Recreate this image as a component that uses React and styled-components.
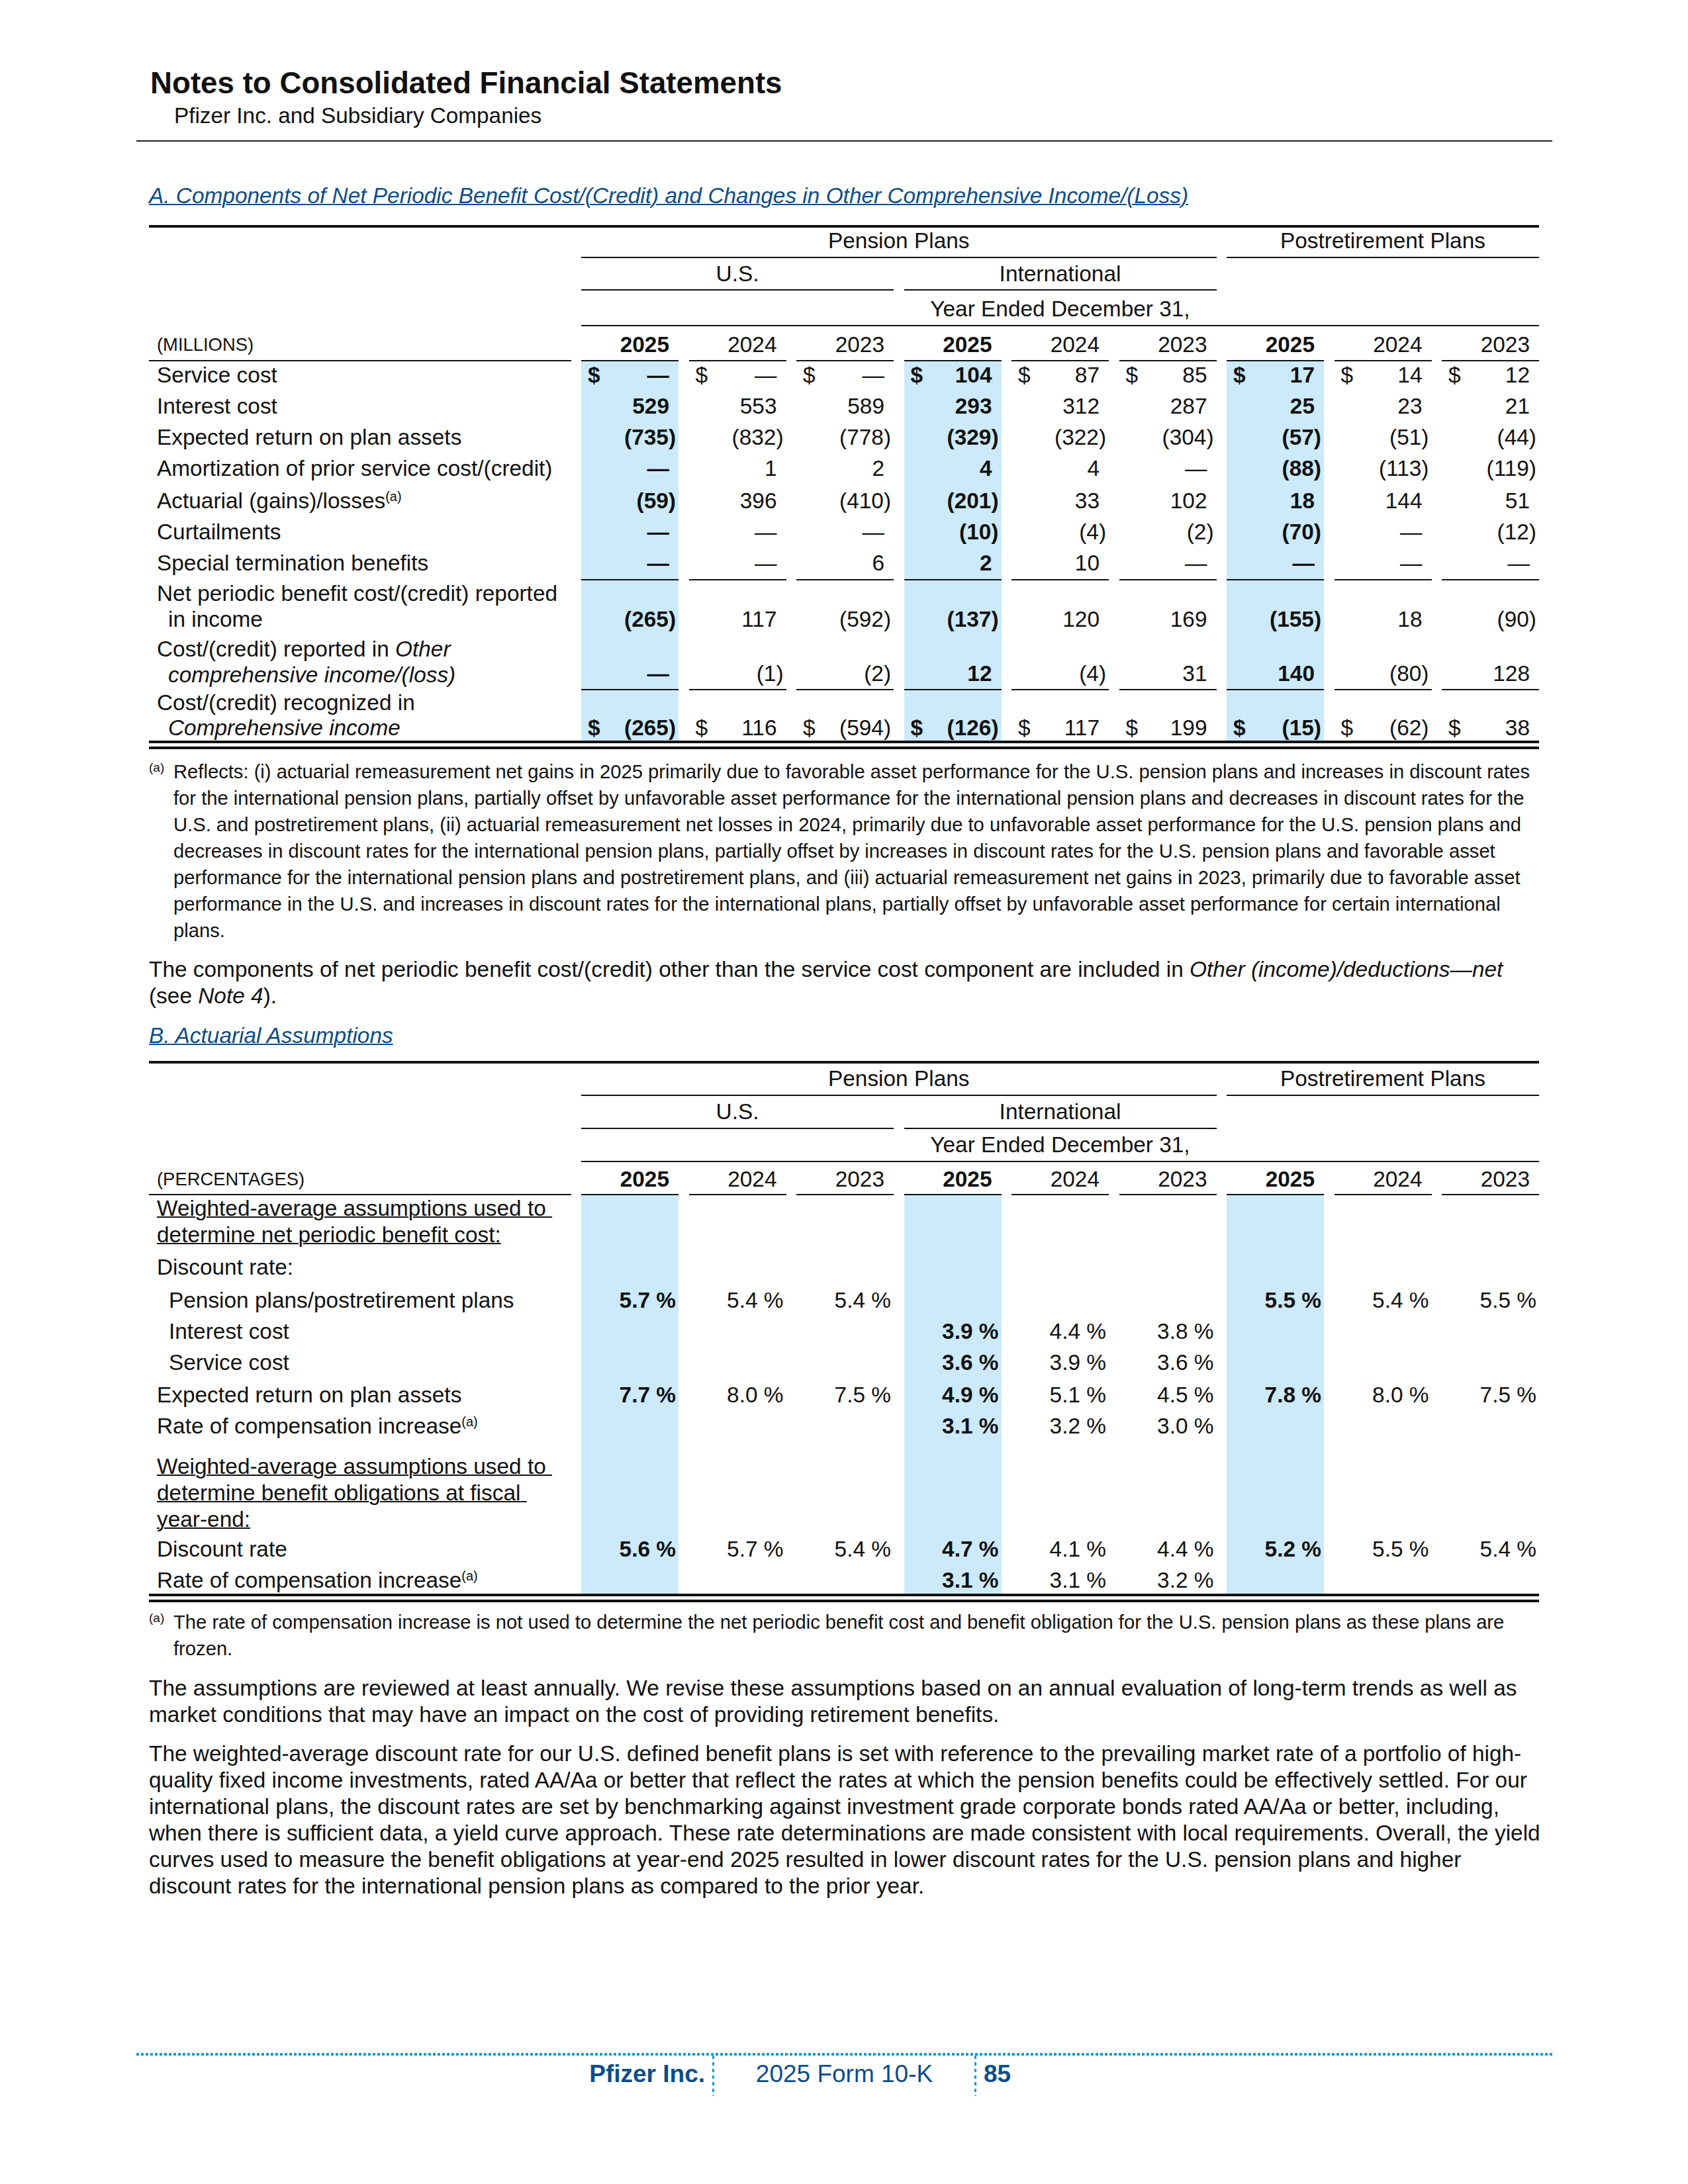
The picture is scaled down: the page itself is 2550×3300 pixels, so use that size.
import React from 'react'
import styled, { createGlobalStyle } from 'styled-components'

const INK = '#111'
const NAVY = '#0c4d8a'
const SKY = '#1599d6'
const HILITE = '#cceafc'
const COLS = '637.5px repeat(9, 147px)'
const HI = [true, false, false, true, false, false, true, false, false]
const EMPTY = ['', '', '', '', '', '', '', '', '']

const GlobalStyle = createGlobalStyle`
  html, body {
    margin: 0;
    padding: 0;
    background: #fff;
  }
  body {
    font-family: "Liberation Sans", Arial, sans-serif;
    color: ${INK};
  }
`

const Page = styled.div`
  width: 2550px;
  min-height: 3300px;
  box-sizing: border-box;
  padding: 100px 205px 133px 206px;
  display: flex;
  flex-direction: column;
`

const Header = styled.header`
  padding: 0 20px 17px 21px;
  border-bottom: 2px solid #222;
`

const Title = styled.h1`
  margin: 0;
  font-size: 45.7px;
  line-height: 52px;
  font-weight: 700;
`

const Subtitle = styled.div`
  margin-top: 3px;
  padding-left: 36px;
  font-size: 33.3px;
  line-height: 40px;
`

const Body = styled.main`
  padding: 0 20px 0 19px;
`

const SectionLink = styled.a`
  display: block;
  margin-top: ${p => p.$mt}px;
  font-size: 33.4px;
  line-height: 40px;
  font-style: italic;
  color: ${NAVY};
  text-decoration: underline;
  text-decoration-thickness: 2px;
  white-space: nowrap;
`

const Table = styled.div`
  margin-top: ${p => p.$mt}px;
  border-top: 4px solid ${INK};
  font-size: 33.4px;
`

const Row = styled.div`
  display: grid;
  grid-template-columns: ${COLS};
  column-gap: 15.5px;
  line-height: ${p => p.$lh || 40}px;

  & > * {
    padding-top: ${p => p.$pt ?? 1}px;
    padding-bottom: ${p => p.$pb ?? 6}px;
  }
`

const HeadCell = styled.div`
  grid-column: ${p => p.$col};
  text-align: center;
  white-space: nowrap;
  border-bottom: ${p => (p.$rule ? `2px solid ${INK}` : 'none')};
`

const Unit = styled.div`
  grid-column: 1;
  padding-left: 12px;
  font-size: 27.4px;
  border-bottom: 2px solid ${INK};
`

const YearCell = styled.div`
  text-align: right;
  padding-right: 14px;
  font-weight: ${p => (p.$bold ? 700 : 400)};
  border-bottom: 2px solid ${INK};
`

const Label = styled.div`
  grid-column: 1;
  white-space: nowrap;
  padding-left: ${p => 12 + (p.$indent ? 18 : 0) + (p.$hang ? 17 : 0)}px;
  text-indent: ${p => (p.$hang ? -17 : 0)}px;
`

const Val = styled.div`
  display: flex;
  justify-content: space-between;
  align-items: flex-end;
  padding-left: 10px;
  padding-right: 4px;
  white-space: nowrap;
  background: ${p => (p.$hi ? HILITE : 'transparent')};
  font-weight: ${p => (p.$hi ? 700 : 400)};
  border-bottom: ${p => (p.$rule ? `2px solid ${INK}` : 'none')};
`

const Amount = styled.span`
  padding-right: ${p => (p.$hang ? 10 : 0)}px;
`

const Sup = styled.sup`
  font-size: 20px;
  line-height: 0;
  vertical-align: 11px;
`

const Under = styled.span`
  text-decoration: underline;
  text-decoration-thickness: 2px;
`

const DoubleRule = styled.div`
  height: 5px;
  border-top: 4px solid ${INK};
  border-bottom: 4px solid ${INK};
`

const Note = styled.p`
  margin: ${p => p.$mt}px 0 0;
  padding-left: 37px;
  font-size: 29.2px;
  line-height: 40px;
  white-space: nowrap;
`

const NoteMark = styled.span`
  display: inline-block;
  width: 37px;
  margin-left: -37px;
  font-size: 19px;
  line-height: 1;
  vertical-align: 10px;
`

const Para = styled.p`
  margin: ${p => p.$mt}px 0 0;
  font-size: 33.4px;
  line-height: 40px;
  white-space: nowrap;
`

const Footer = styled.footer`
  margin-top: auto;
  color: ${NAVY};
  font-size: 37px;
  line-height: 44px;
`

const DotLine = styled.div`
  height: 4px;
  background: repeating-linear-gradient(90deg, ${SKY} 0 4px, transparent 4px 7px);
`

const FootRow = styled.div`
  display: grid;
  grid-template-columns: 1fr 399px 1fr;
  height: 61px;
`

const FootItem = styled.div`
  padding-top: 6px;
  text-align: ${p => p.$align || 'left'};
  padding-left: ${p => p.$pl || 0}px;
  padding-right: ${p => p.$pr || 0}px;
  font-weight: ${p => (p.$bold ? 700 : 400)};
`

const FootMid = styled(FootItem)`
  background-image:
    repeating-linear-gradient(180deg, ${SKY} 0 5px, transparent 5px 10px),
    repeating-linear-gradient(180deg, ${SKY} 0 5px, transparent 5px 10px);
  background-size: 3px 100%;
  background-position: left top, right top;
  background-repeat: no-repeat;
`

function Lines({ lines }) {
  return lines.map((l, i) => (
    <React.Fragment key={i}>
      {i > 0 && <br />}
      {l}
    </React.Fragment>
  ))
}

function Values({ vals = EMPTY, dollar, rule }) {
  return vals.map((v, i) => (
    <Val key={i} $hi={HI[i]} $rule={rule}>
      <span>{dollar ? '$' : ''}</span>
      {v !== '' && (
        <Amount $hang={!v.endsWith(')') && !v.includes('%')}>{v}</Amount>
      )}
    </Val>
  ))
}

function TableHead({ unit, rows }) {
  return (
    <>
      <Row $pt={rows[0][0]} $pb={rows[0][1]}>
        <HeadCell $col="2 / 8" $rule>Pension Plans</HeadCell>
        <HeadCell $col="8 / 11" $rule>Postretirement Plans</HeadCell>
      </Row>
      <Row $pt={rows[1][0]} $pb={rows[1][1]}>
        <HeadCell $col="2 / 5" $rule>U.S.</HeadCell>
        <HeadCell $col="5 / 8" $rule>International</HeadCell>
      </Row>
      <Row $pt={rows[2][0]} $pb={rows[2][1]}>
        <HeadCell $col="2 / 11" $rule>Year Ended December 31,</HeadCell>
      </Row>
      <Row $pt={rows[3][0]} $pb={rows[3][1]}>
        <Unit>{unit}</Unit>
        {['2025', '2024', '2023', '2025', '2024', '2023', '2025', '2024', '2023'].map((y, i) => (
          <YearCell key={i} $bold={HI[i]}>{y}</YearCell>
        ))}
      </Row>
    </>
  )
}

const costRows = [
  { label: 'Service cost', dollar: true, vals: ['—', '—', '—', '104', '87', '85', '17', '14', '12'] },
  { label: 'Interest cost', vals: ['529', '553', '589', '293', '312', '287', '25', '23', '21'] },
  { label: 'Expected return on plan assets', vals: ['(735)', '(832)', '(778)', '(329)', '(322)', '(304)', '(57)', '(51)', '(44)'] },
  { label: 'Amortization of prior service cost/(credit)', vals: ['—', '1', '2', '4', '4', '—', '(88)', '(113)', '(119)'] },
  { label: <>Actuarial (gains)/losses<Sup>(a)</Sup></>, pt: 3, pb: 6, vals: ['(59)', '396', '(410)', '(201)', '33', '102', '18', '144', '51'] },
  { label: 'Curtailments', vals: ['—', '—', '—', '(10)', '(4)', '(2)', '(70)', '—', '(12)'] },
  { label: 'Special termination benefits', pb: 4, rule: true, vals: ['—', '—', '6', '2', '10', '—', '—', '—', '—'] },
  {
    label: <Lines lines={['Net periodic benefit cost/(credit) reported', 'in income']} />,
    hang: true, lh: 39, pt: 0, pb: 6,
    vals: ['(265)', '117', '(592)', '(137)', '120', '169', '(155)', '18', '(90)'],
  },
  {
    label: <Lines lines={[<>Cost/(credit) reported in <i>Other</i></>, <i>comprehensive income/(loss)</i>]} />,
    hang: true, lh: 39, pt: 0, pb: 4, rule: true,
    vals: ['—', '(1)', '(2)', '12', '(4)', '31', '140', '(80)', '128'],
  },
  {
    label: <Lines lines={['Cost/(credit) recognized in', <i>Comprehensive income</i>]} />,
    hang: true, lh: 38, pt: 0, pb: 0, dollar: true,
    vals: ['(265)', '116', '(594)', '(126)', '117', '199', '(15)', '(62)', '38'],
  },
]

const pct = s => s.replace(' ', '\u00a0')

const rateRows = [
  {
    label: <Lines lines={[<Under>Weighted-average assumptions used to{'\u00a0'}</Under>, <Under>determine net periodic benefit cost:</Under>]} />,
    pt: 0, pb: 8,
  },
  { label: 'Discount rate:', pt: 1, pb: 9 },
  { label: 'Pension plans/postretirement plans', indent: true, vals: ['5.7 %', '5.4 %', '5.4 %', '', '', '', '5.5 %', '5.4 %', '5.5 %'] },
  { label: 'Interest cost', indent: true, vals: ['', '', '', '3.9 %', '4.4 %', '3.8 %', '', '', ''] },
  { label: 'Service cost', indent: true, pb: 8, vals: ['', '', '', '3.6 %', '3.9 %', '3.6 %', '', '', ''] },
  { label: 'Expected return on plan assets', vals: ['7.7 %', '8.0 %', '7.5 %', '4.9 %', '5.1 %', '4.5 %', '7.8 %', '8.0 %', '7.5 %'] },
  { label: <>Rate of compensation increase<Sup>(a)</Sup></>, pb: 5, vals: ['', '', '', '3.1 %', '3.2 %', '3.0 %', '', '', ''] },
  {
    label: (
      <Lines
        lines={[
          <Under>Weighted-average assumptions used to{'\u00a0'}</Under>,
          <Under>determine benefit obligations at fiscal{'\u00a0'}</Under>,
          <Under>year-end:</Under>,
        ]}
      />
    ),
    pt: 16, pb: 4,
  },
  { label: 'Discount rate', vals: ['5.6 %', '5.7 %', '5.4 %', '4.7 %', '4.1 %', '4.4 %', '5.2 %', '5.5 %', '5.4 %'] },
  { label: <>Rate of compensation increase<Sup>(a)</Sup></>, pt: 1, pb: 0, vals: ['', '', '', '3.1 %', '3.1 %', '3.2 %', '', '', ''] },
]

function BodyRows({ rows }) {
  return rows.map((r, i) => (
    <Row key={i} $pt={r.pt} $pb={r.pb} $lh={r.lh}>
      <Label $hang={r.hang} $indent={r.indent}>{r.label}</Label>
      <Values vals={r.vals ? r.vals.map(pct) : EMPTY} dollar={r.dollar} rule={r.rule} />
    </Row>
  ))
}

const note1 = [
  'Reflects: (i) actuarial remeasurement net gains in 2025 primarily due to favorable asset performance for the U.S. pension plans and increases in discount rates',
  'for the international pension plans, partially offset by unfavorable asset performance for the international pension plans and decreases in discount rates for the',
  'U.S. and postretirement plans, (ii) actuarial remeasurement net losses in 2024, primarily due to unfavorable asset performance for the U.S. pension plans and',
  'decreases in discount rates for the international pension plans, partially offset by increases in discount rates for the U.S. pension plans and favorable asset',
  'performance for the international pension plans and postretirement plans, and (iii) actuarial remeasurement net gains in 2023, primarily due to favorable asset',
  'performance in the U.S. and increases in discount rates for the international plans, partially offset by unfavorable asset performance for certain international',
  'plans.',
]

const note2 = [
  'The rate of compensation increase is not used to determine the net periodic benefit cost and benefit obligation for the U.S. pension plans as these plans are',
  'frozen.',
]

const reviewText = [
  'The assumptions are reviewed at least annually. We revise these assumptions based on an annual evaluation of long-term trends as well as',
  'market conditions that may have an impact on the cost of providing retirement benefits.',
]

const discountText = [
  'The weighted-average discount rate for our U.S. defined benefit plans is set with reference to the prevailing market rate of a portfolio of high-',
  'quality fixed income investments, rated AA/Aa or better that reflect the rates at which the pension benefits could be effectively settled. For our',
  'international plans, the discount rates are set by benchmarking against investment grade corporate bonds rated AA/Aa or better, including,',
  'when there is sufficient data, a yield curve approach. These rate determinations are made consistent with local requirements. Overall, the yield',
  'curves used to measure the benefit obligations at year-end 2025 resulted in lower discount rates for the U.S. pension plans and higher',
  'discount rates for the international pension plans as compared to the prior year.',
]

export default function App() {
  return (
    <>
      <GlobalStyle />
      <Page>
        <Header>
          <Title>Notes to Consolidated Financial Statements</Title>
          <Subtitle>Pfizer Inc. and Subsidiary Companies</Subtitle>
        </Header>

        <Body>
          <SectionLink $mt={62}>
            A. Components of Net Periodic Benefit Cost/(Credit) and Changes in Other Comprehensive Income/(Loss)
          </SectionLink>

          <Table $mt={24}>
            <TableHead unit="(MILLIONS)" rows={[[0, 4], [4, 3], [8, 4], [8, 3]]} />
            <BodyRows rows={costRows} />
            <DoubleRule />
          </Table>

          <Note $mt={14}>
            <NoteMark>(a)</NoteMark>
            <Lines lines={note1} />
          </Note>

          <Para $mt={19}>
            The components of net periodic benefit cost/(credit) other than the service cost component are included in{' '}
            <i>Other (income)/deductions—net</i>
            <br />
            (see <i>Note 4</i>).
          </Para>

          <SectionLink $mt={20}>B. Actuarial Assumptions</SectionLink>

          <Table $mt={18}>
            <TableHead unit="(PERCENTAGES)" rows={[[3, 4], [4, 4], [4, 4], [6, 2]]} />
            <BodyRows rows={rateRows} />
            <DoubleRule />
          </Table>

          <Note $mt={10}>
            <NoteMark>(a)</NoteMark>
            <Lines lines={note2} />
          </Note>

          <Para $mt={20}>
            <Lines lines={reviewText} />
          </Para>

          <Para $mt={19}>
            <Lines lines={discountText} />
          </Para>
        </Body>

        <Footer>
          <DotLine />
          <FootRow>
            <FootItem $align="right" $pr={11} $bold>Pfizer Inc.</FootItem>
            <FootMid $align="center">2025 Form 10-K</FootMid>
            <FootItem $pl={11} $bold>85</FootItem>
          </FootRow>
        </Footer>
      </Page>
    </>
  )
}
